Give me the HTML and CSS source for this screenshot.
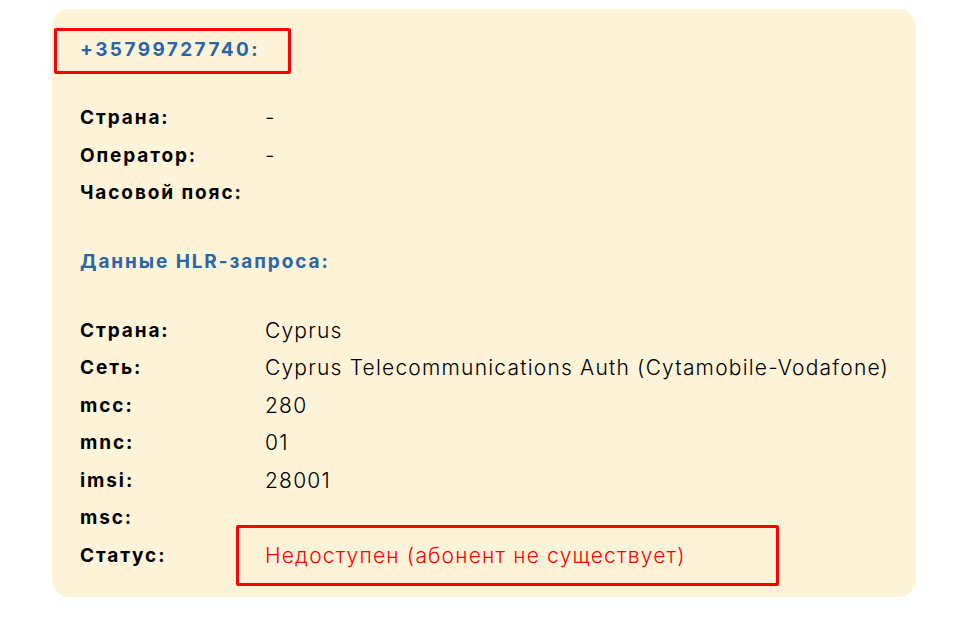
FILE: index.html
```html
<!DOCTYPE html>
<html lang="ru">
<head>
    <meta charset="UTF-8">
    <title>HLR</title>
    <link rel="stylesheet" href="styles.css">
</head>
<body>
    <div class="card">
        <div class="phone"><span class="mark">+35799727740:</span></div>

        <div class="rows">
            <div class="label">Страна:</div><div class="value">-</div>
            <div class="label">Оператор:</div><div class="value">-</div>
            <div class="label">Часовой пояс:</div><div class="value"></div>
        </div>

        <h3 class="title">Данные HLR-запроса:</h3>

        <div class="rows hlr">
            <div class="label">Страна:</div><div class="value">Cyprus</div>
            <div class="label">Сеть:</div><div class="value">Cyprus Telecommunications Auth (Cytamobile-Vodafone)</div>
            <div class="label">mcc:</div><div class="value">280</div>
            <div class="label">mnc:</div><div class="value">01</div>
            <div class="label">imsi:</div><div class="value">28001</div>
            <div class="label">msc:</div><div class="value"></div>
            <div class="label">Статус:</div><div class="value"><span class="status">Недоступен (абонент не существует)</span></div>
        </div>
    </div>
</body>
</html>
```

FILE: styles.css
```css
*{
    box-sizing: border-box;
}

body{
    margin: 0;
    background-color: #ffffff;
    font-family: "Inter", sans-serif;
}

.card{
    margin: 9px 0 0 52px;
    width: 864px;
    height: 588px;
    background-color: #fdf3d9;
    border-radius: 18px;
    padding: 19px 0 0 28px;
}

.phone{
    height: 45px;
    margin-left: -26px;
}

.mark{
    display: inline-block;
    width: 237px;
    border: 3px solid #ff0000;
    border-radius: 2px;
    height: 46px;
    line-height: 38px;
    padding: 0 0 0 23px;
    color: #2a66a6;
    font-weight: 700;
    font-size: 19px;
    letter-spacing: 2.4px;
}

.rows{
    display: grid;
    grid-template-columns: 185px 1fr;
    margin-top: 26px;
    line-height: 37.5px;
}

.hlr{
    margin-top: 32px;
}

.label{
    font-weight: 700;
    font-size: 19px;
    letter-spacing: 1.9px;
    color: #000000;
}

.value{
    font-weight: 300;
    color: #000000;
    font-size: 21px;
    letter-spacing: 1.2px;
    white-space: nowrap;
}

.title{
    margin: 31px 0 0 0;
    line-height: 37px;
    color: #2a66a6;
    font-size: 19px;
    letter-spacing: 1.9px;
    font-weight: 700;
}

.status{
    display: inline-block;
    width: 543px;
    border: 3px solid #ff0000;
    border-radius: 2px;
    height: 61px;
    line-height: 55px;
    margin: -12px 0 0 -29px;
    padding: 0 0 0 26px;
    color: #ff0000;
}
```
